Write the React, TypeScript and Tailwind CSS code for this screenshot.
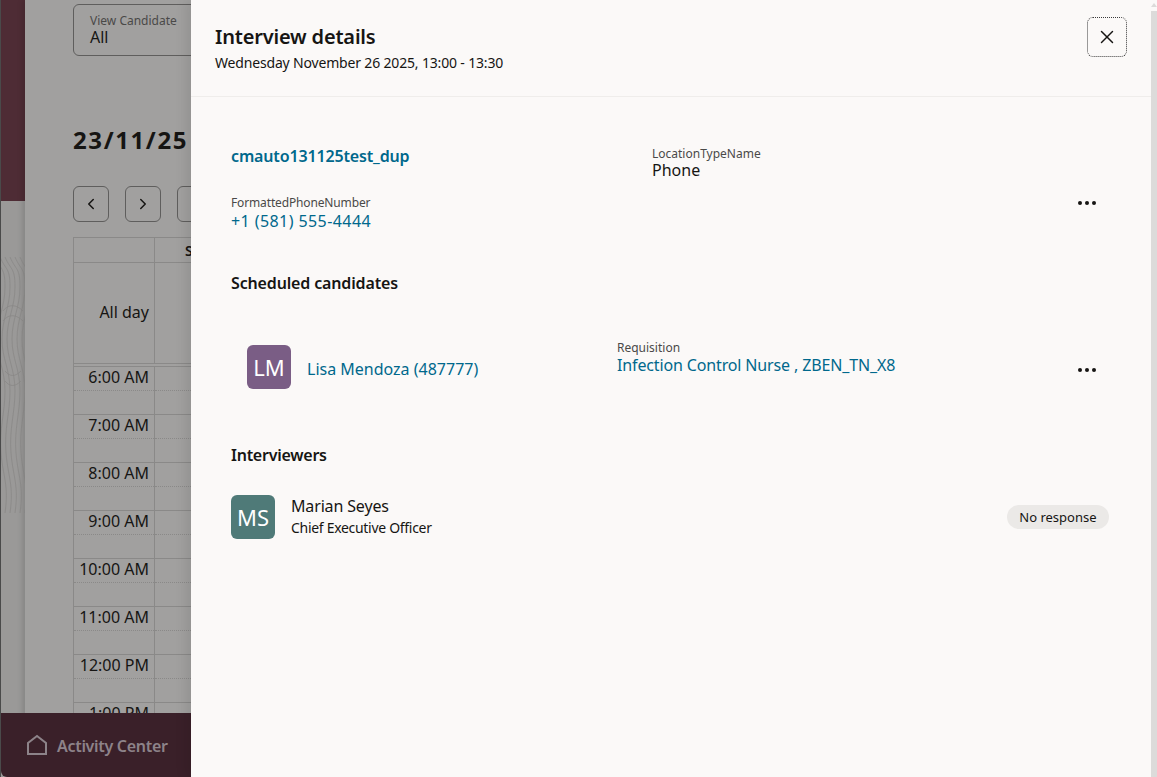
import { ChevronLeft, ChevronRight, X } from "lucide-react";

const FONT = "font-['Noto_Sans','Open_Sans',sans-serif]";
const HOURS = ["6:00 AM", "7:00 AM", "8:00 AM", "9:00 AM", "10:00 AM", "11:00 AM", "12:00 PM", "1:00 PM"];
const CONTOUR_OFFSETS = [-6, -1, 4, 9, 14, 19];

function Dots() {
  return (
    <button className="flex h-6 w-6 items-center justify-center">
      <svg width="22" height="6" viewBox="0 0 22 6" fill="#161513">
        <circle cx="4" cy="3" r="2" />
        <circle cx="11" cy="3" r="2" />
        <circle cx="18" cy="3" r="2" />
      </svg>
    </button>
  );
}

function Contours() {
  return (
    <svg className="h-full w-full" viewBox="0 0 24 340" fill="none" stroke="#7f7e7d" strokeWidth="0.7">
      {CONTOUR_OFFSETS.map((x) => (
        <g key={x} transform={`translate(${x} 0)`}>
          <path d="M0 56c6 14 10 10 10 30s-8 32-8 52 8 30 8 52-6 38-4 62 8 32 4 60" />
        </g>
      ))}
      <path d="M2 110c6-8 14-6 20 0M2 120c6-8 14-6 20 0M4 170c5 6 10 6 16 0M4 180c5 6 10 6 16 0" />
    </svg>
  );
}

function Background() {
  return (
    <div className="flex h-full">
      <div className="flex w-[25px] shrink-0 flex-col border-l border-[#4a4a4a] bg-[#9a9998]">
        <div className="h-[201px] shrink-0 bg-[#4e2c35]" />
        <div className="h-[340px] shrink-0 overflow-hidden opacity-70">
          <Contours />
        </div>
      </div>
      <div className="flex-1 bg-[#a1a09f] pl-[48px] text-[#161513] shadow-[-3px_0_5px_rgba(0,0,0,0.12)]">
        <div className="mt-[4px] flex h-[52px] w-[200px] flex-col rounded-md border border-[#5f5e5d] pl-[16px] pt-[9px]">
          <span className="text-xs leading-[14px] text-[#4a4948]">View Candidate</span>
          <span className="text-base leading-[18px]">All</span>
        </div>
        <div className="mt-[68px] whitespace-nowrap text-2xl leading-8 font-bold tracking-[1.6px]">23/11/25 - 29/11/25</div>
        <div className="mt-[30px] flex gap-[16px]">
          {[<ChevronLeft key="l" size={18} />, <ChevronRight key="r" size={18} />, null].map((icon, i) => (
            <div key={i} className="flex h-9 w-9 items-center justify-center rounded-md border border-[#5f5e5d]">
              {icon}
            </div>
          ))}
        </div>
        <div className="mt-[15px] border-l border-t border-[#8a8988]">
          <div className="flex h-[25px] border-b border-[#8a8988]">
            <div className="w-[81px] border-r border-[#8a8988]" />
            <div className="pl-[30px] text-sm font-semibold leading-[25px]">S</div>
          </div>
          <div className="flex h-[101px] border-b border-[#8a8988]">
            <div className="flex w-[81px] items-center justify-end border-r border-[#8a8988] pb-[2px] pr-[5px] text-base">All day</div>
          </div>
          <div className="h-[3px] border-b border-[#8a8988]" />
          {HOURS.map((hour) => (
            <div key={hour} className="flex h-[48px] border-b border-[#8a8988]">
              <div className="w-[81px] border-r border-[#8a8988]">
                <div className="h-[24px] border-b border-dotted border-[#8a8988] pr-[5px] text-right text-base leading-[20px]">{hour}</div>
              </div>
              <div className="flex-1">
                <div className="h-[24px] border-b border-dotted border-[#8a8988]" />
              </div>
            </div>
          ))}
        </div>
      </div>
    </div>
  );
}

export default function App() {
  return (
    <div className={`relative h-[777px] w-[1157px] overflow-hidden ${FONT}`}>
      <Background />

      <div className="absolute bottom-0 left-[1px] flex h-[64px] w-[190px] items-center gap-[9px] rounded-bl-md bg-[#3a2029] pl-[25px] text-[#8d8389]">
        <svg width="22" height="22" viewBox="0 0 22 22" fill="none" stroke="#8d8389" strokeWidth="2">
          <path d="M2 20V9l9-7 9 7v11z" />
        </svg>
        <span className="mt-[2px] text-base font-semibold tracking-[-0.3px]">Activity Center</span>
      </div>

      <div className="absolute bottom-0 left-[191px] right-0 top-0 flex bg-[#fbf9f8] text-[#161513] shadow-[-6px_0_10px_rgba(0,0,0,0.08)]">
        <div className="flex-1">
          <div className="relative h-[97px] border-b border-[#efedeb] pl-[24px] pt-[24px]">
            <h1 className="text-xl leading-[26px] font-semibold tracking-[-0.18px]">Interview details</h1>
            <p className="mt-[3px] text-sm leading-[20px] tracking-[-0.17px]">Wednesday November 26 2025, 13:00 - 13:30</p>
            <button className="absolute left-[896px] top-[17px] flex h-10 w-10 items-center justify-center rounded-md border border-dotted border-[#3a3a3a]">
              <X size={22} strokeWidth={1.6} />
            </button>
          </div>

          <div className="pl-[40px] pr-[34px]">
            <div className="flex pt-[47px]">
              <a className="mt-[1px] w-[421px] text-base leading-[22px] font-semibold tracking-[-0.15px] text-[#00688c]">cmauto131125test_dup</a>
              <div className="mt-[3px]">
                <div className="text-xs leading-[14px] text-[#4a4948]">LocationTypeName</div>
                <div className="text-base leading-[18px]">Phone</div>
              </div>
            </div>
            <div className="mt-[16px] flex items-start justify-between">
              <div>
                <div className="text-xs leading-[16px] tracking-[-0.14px] text-[#4a4948]">FormattedPhoneNumber</div>
                <a className="block text-base leading-[20px] tracking-[0.42px] text-[#00688c]">+1 (581) 555-4444</a>
              </div>
              <div className="mr-[18px] mt-[-4px]">
                <Dots />
              </div>
            </div>

            <h2 className="mt-[41px] text-base leading-[22px] font-semibold tracking-[-0.15px]">Scheduled candidates</h2>
            <div className="mt-[51px] flex items-start pl-[16px]">
              <div className="flex h-11 w-11 items-center justify-center rounded-md bg-[#7a5d85] text-[22px] text-white">LM</div>
              <a className="ml-[16px] mt-[12px] w-[310px] text-base leading-[24px] text-[#00688c]">Lisa Mendoza (487777)</a>
              <div className="mt-[-4px] flex-1">
                <div className="text-xs leading-[14px] text-[#4a4948]">Requisition</div>
                <a className="block text-base leading-[20px] tracking-[-0.14px] text-[#00688c]">Infection Control Nurse , ZBEN_TN_X8</a>
              </div>
              <div className="mr-[18px] mt-[13px]">
                <Dots />
              </div>
            </div>

            <h2 className="mt-[55px] text-base leading-[22px] font-semibold tracking-[-0.25px]">Interviewers</h2>
            <div className="mt-[29px] flex items-center pr-[8px]">
              <div className="flex h-11 w-11 items-center justify-center rounded-md bg-[#4f7a78] text-[22px] text-white">MS</div>
              <div className="ml-[16px] flex-1">
                <div className="text-base leading-[22px] tracking-[-0.15px]">Marian Seyes</div>
                <div className="text-sm leading-[22px] tracking-[-0.3px]">Chief Executive Officer</div>
              </div>
              <span className="rounded-full bg-[#ebe9e7] px-[12.5px] text-[13px] leading-[24px]">No response</span>
            </div>
          </div>
        </div>
        <div className="flex w-[6px] shrink-0 flex-col items-center">
          <svg className="mt-[3px] shrink-0" width="6" height="4" viewBox="0 0 6 4" fill="#dcdbda">
            <path d="M3 0l3 4H0z" />
          </svg>
          <div className="mt-[4px] w-full flex-1 bg-[#dcdbda]" />
        </div>
      </div>
    </div>
  );
}
